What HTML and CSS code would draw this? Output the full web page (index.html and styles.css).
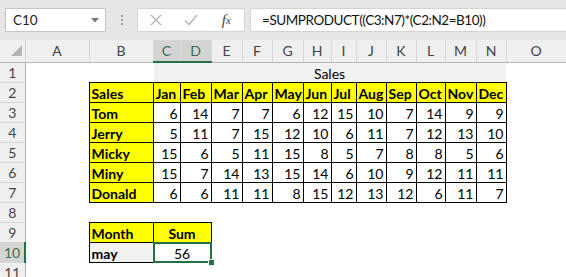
FILE: index.html
```html
<!DOCTYPE html>
<html>
<head>
<meta charset="utf-8">
<title>Sales - SUMPRODUCT</title>
<link rel="stylesheet" href="styles.css">
</head>
<body>
<div class="formula-bar">
	<div class="name-box">
		<span>C10</span>
		<svg width="8" height="5" viewBox="0 0 8 5"><path d="M0 0 L8 0 L4 4.5 Z" fill="#7a7a7a"/></svg>
	</div>
	<div class="grip"><i></i><i></i><i></i></div>
	<div class="fx-buttons">
		<span class="btn">
			<svg width="12" height="12" viewBox="0 0 12 12"><path d="M1 1 L11 11 M11 1 L1 11" stroke="#b3b3b3" stroke-width="1.3" fill="none"/></svg>
		</span>
		<span class="btn">
			<svg width="14" height="12" viewBox="0 0 14 12"><path d="M1 6.5 L5 10.5 L13 1" stroke="#b3b3b3" stroke-width="1.4" fill="none"/></svg>
		</span>
		<span class="btn fx">f<sub>x</sub></span>
	</div>
	<div class="formula">=SUMPRODUCT((C3:N7)*(C2:N2=B10))</div>
</div>

<table class="sheet">
	<colgroup>
		<col style="width:25px"><col style="width:64px"><col style="width:64px"><col style="width:27px">
		<col style="width:31px"><col style="width:31px"><col style="width:30px"><col style="width:31px">
		<col style="width:28px"><col style="width:25px"><col style="width:30px"><col style="width:30px">
		<col style="width:29px"><col style="width:31px"><col style="width:30px"><col style="width:60px">
	</colgroup>
	<tr class="heads">
		<th class="corner"><span class="tri"></span></th>
		<th>A</th><th>B</th><th class="on">C</th><th class="on">D</th><th>E</th><th>F</th><th>G</th>
		<th>H</th><th>I</th><th>J</th><th>K</th><th>L</th><th>M</th><th>N</th><th>O</th>
	</tr>
	<tr>
		<th class="rh">1</th><td></td><td></td>
		<td class="title" colspan="12">Sales</td><td></td>
	</tr>
	<tr>
		<th class="rh">2</th><td></td>
		<td class="b hd">Sales</td><td class="b hd">Jan</td><td class="b hd">Feb</td><td class="b hd">Mar</td>
		<td class="b hd">Apr</td><td class="b hd">May</td><td class="b hd">Jun</td><td class="b hd">Jul</td>
		<td class="b hd">Aug</td><td class="b hd">Sep</td><td class="b hd">Oct</td><td class="b hd">Nov</td>
		<td class="b hd">Dec</td><td></td>
	</tr>
	<tr>
		<th class="rh">3</th><td></td><td class="b hd">Tom</td>
		<td class="b n">6</td><td class="b n">14</td><td class="b n">7</td><td class="b n">7</td><td class="b n">6</td><td class="b n">12</td>
		<td class="b n">15</td><td class="b n">10</td><td class="b n">7</td><td class="b n">14</td><td class="b n">9</td><td class="b n">9</td><td></td>
	</tr>
	<tr>
		<th class="rh">4</th><td></td><td class="b hd">Jerry</td>
		<td class="b n">5</td><td class="b n">11</td><td class="b n">7</td><td class="b n">15</td><td class="b n">12</td><td class="b n">10</td>
		<td class="b n">6</td><td class="b n">11</td><td class="b n">7</td><td class="b n">12</td><td class="b n">13</td><td class="b n">10</td><td></td>
	</tr>
	<tr>
		<th class="rh">5</th><td></td><td class="b hd">Micky</td>
		<td class="b n">15</td><td class="b n">6</td><td class="b n">5</td><td class="b n">11</td><td class="b n">15</td><td class="b n">8</td>
		<td class="b n">5</td><td class="b n">7</td><td class="b n">8</td><td class="b n">8</td><td class="b n">5</td><td class="b n">6</td><td></td>
	</tr>
	<tr>
		<th class="rh">6</th><td></td><td class="b hd">Miny</td>
		<td class="b n">15</td><td class="b n">7</td><td class="b n">14</td><td class="b n">13</td><td class="b n">15</td><td class="b n">14</td>
		<td class="b n">6</td><td class="b n">10</td><td class="b n">9</td><td class="b n">12</td><td class="b n">11</td><td class="b n">11</td><td></td>
	</tr>
	<tr>
		<th class="rh">7</th><td></td><td class="b hd">Donald</td>
		<td class="b n">6</td><td class="b n">6</td><td class="b n">11</td><td class="b n">11</td><td class="b n">8</td><td class="b n">15</td>
		<td class="b n">12</td><td class="b n">13</td><td class="b n">12</td><td class="b n">6</td><td class="b n">11</td><td class="b n">7</td><td></td>
	</tr>
	<tr>
		<th class="rh">8</th><td></td><td></td><td></td><td></td><td></td><td></td><td></td><td></td>
		<td></td><td></td><td></td><td></td><td></td><td></td><td></td>
	</tr>
	<tr>
		<th class="rh">9</th><td></td><td class="b hd">Month</td><td class="b hd c" colspan="2">Sum</td>
		<td></td><td></td><td></td><td></td><td></td><td></td><td></td><td></td><td></td><td></td><td></td>
	</tr>
	<tr>
		<th class="rh on">10</th><td></td><td class="b hd grey">may</td>
		<td class="b c sel" colspan="2">56<div class="sel-box"><span class="handle"></span></div></td>
		<td></td><td></td><td></td><td></td><td></td><td></td><td></td><td></td><td></td><td></td><td></td>
	</tr>
	<tr>
		<th class="rh">11</th><td></td><td></td><td></td><td></td><td></td><td></td><td></td><td></td>
		<td></td><td></td><td></td><td></td><td></td><td></td><td></td>
	</tr>
</table>
</body>
</html>
```

FILE: styles.css
```css
* {
	box-sizing: border-box;
}

body {
	margin: 0;
	background: #e6e6e6;
	font-family: Lato, "Liberation Sans", sans-serif;
	overflow: hidden;
}

/* formula bar */
.formula-bar {
	display: flex;
	align-items: center;
	height: 40px;
	padding: 0 0 0 5px;
}

.name-box {
	display: flex;
	align-items: center;
	justify-content: space-between;
	width: 101px;
	height: 24px;
	padding: 0 6px 0 7px;
	background: #fff;
	border: 1px solid #c6c6c6;
	font-size: 13.5px;
	color: #222;
}

.grip {
	display: flex;
	flex-direction: column;
	gap: 2px;
	margin: 0 14px 0 15px;
}
.grip i {
	display: block;
	width: 2px;
	height: 2px;
	background: #a0a0a0;
}

.fx-buttons {
	display: flex;
	width: 108px;
	height: 24px;
	background: #fff;
	border: 1px solid #d4d4d4;
}
.btn {
	display: flex;
	align-items: center;
	justify-content: center;
	width: 36px;
}
.fx {
	font-family: "Liberation Serif", serif;
	font-style: italic;
	font-size: 15px;
	color: #444;
}
.fx sub {
	font-size: 11px;
	vertical-align: -1px;
}

.formula {
	flex: 1;
	height: 24px;
	margin-left: 5px;
	padding-left: 11px;
	line-height: 22px;
	background: #fff;
	border: 1px solid #d4d4d4;
	border-right: none;
	font-size: 13.5px;
	letter-spacing: -0.45px;
	color: #111;
	white-space: nowrap;
}

/* sheet */
.sheet {
	border-collapse: collapse;
	table-layout: fixed;
	width: 566px;
	background: #fff;
	font-size: 14px;
}

.sheet tr {
	height: 20px;
}
.sheet tr.heads {
	height: 22px;
}

.heads th {
	background: #efefef;
	font-weight: normal;
	color: #444;
	font-size: 14px;
	border-right: 1px solid #d8d8d8;
	border-bottom: 1px solid #b8b8b8;
	padding: 0;
}
.heads th.on {
	background: #d3d3d3;
	color: #3b6e52;
	border-bottom: 2px solid #217346;
}

.corner {
	text-align: right;
	vertical-align: bottom;
	padding: 0 3px 3px 0 !important;
}
.tri {
	display: inline-block;
	width: 0;
	height: 0;
	border-left: 11px solid transparent;
	border-bottom: 11px solid #b4b4b4;
}

.rh {
	background: #efefef;
	font-weight: normal;
	color: #444;
	font-size: 14px;
	border-right: 1px solid #b8b8b8;
	border-bottom: 1px solid #d8d8d8;
	padding: 0;
}
.rh.on {
	background: #d3d3d3;
	color: #3b6e52;
	border-right: 2px solid #217346;
}

.sheet td {
	border: 1px dotted transparent;
	padding: 0 2px;
	vertical-align: bottom;
	line-height: 17px;
	white-space: nowrap;
	overflow: hidden;
	color: #000;
}

.sheet td.b {
	border: 1px solid #000;
}
.sheet td.hd {
	background: #ffff00;
	font-weight: bold;
}
.sheet td.grey {
	background: #f2f2f2;
}
.sheet td.n {
	text-align: right;
}
.sheet td.c {
	text-align: center;
}
.sheet td.title {
	background: #f2f2f2;
	text-align: center;
}

/* active cell */
.sheet td.sel {
	position: relative;
	overflow: visible;
}
.sel-box {
	position: absolute;
	left: -1px;
	top: -1px;
	right: -1px;
	bottom: -1px;
	border: 2px solid #217346;
}
.handle {
	position: absolute;
	right: -5px;
	bottom: -5px;
	width: 7px;
	height: 7px;
	background: #217346;
	border: 1px solid #fff;
}
```
